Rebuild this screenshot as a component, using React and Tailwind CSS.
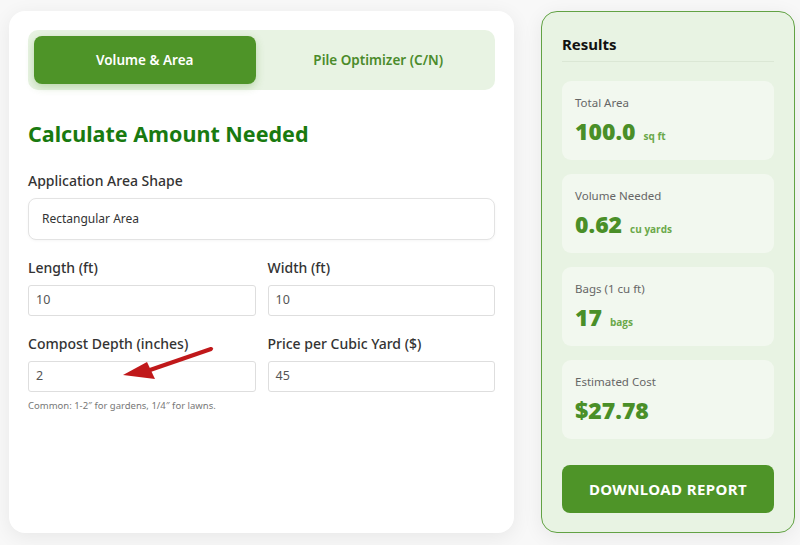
import React from 'react';

function Field({ label, value, className = '' }) {
    return (
        <div className={className}>
            <p className="text-[14px] leading-5 font-medium text-[#333]">{label}</p>
            <div className="mt-[7px] flex h-[31px] items-center rounded-[3px] border border-[#dedede] bg-white px-[7px] text-[12.5px] text-[#555]">
                {value}
            </div>
        </div>
    );
}

function ResultBox({ label, value, unit }) {
    return (
        <div className="h-[79px] rounded-[9px] bg-[#f2f8ef] px-[13px] pt-[14px]">
            <p className="text-[11.5px] leading-4 text-[#666]">{label}</p>
            <p className="mt-[6px] flex items-baseline gap-[8px] font-['Open_Sans',sans-serif] font-extrabold text-[#4a8f28]">
                <span className="text-[23px] leading-7">{value}</span>
                {unit && <span className="text-[10px] font-bold text-[#6aa84a]">{unit}</span>}
            </p>
        </div>
    );
}

export default function App() {
    return (
        <div className="flex h-[545px] w-[800px] gap-[27px] overflow-hidden bg-[#f8f8f8] pl-[9px] pt-[11px] font-['Noto_Sans',sans-serif]">
            <div className="relative h-[522px] w-[505px] shrink-0 rounded-[16px] bg-white px-[19px] pt-[19px] shadow-[0_4px_20px_rgba(0,0,0,0.07)]">
                <div className="flex h-[60px] gap-[12px] rounded-[10px] bg-[#e8f3e3] p-[6px]">
                    <div className="flex flex-1 items-center justify-center rounded-[8px] bg-[#4e9428] text-[13.5px] font-semibold text-white shadow-[0_3px_8px_rgba(78,148,40,0.3)]">
                        Volume &amp; Area
                    </div>
                    <div className="flex flex-1 items-center justify-center text-[13.5px] font-semibold text-[#4b8b2b]">
                        Pile Optimizer (C/N)
                    </div>
                </div>

                <h2 className="mt-[29px] text-[21.5px] leading-[30px] font-bold text-[#197a10]">
                    Calculate Amount Needed
                </h2>

                <p className="mt-[22px] text-[14px] leading-5 font-medium text-[#333]">
                    Application Area Shape
                </p>
                <div className="mt-[7px] flex h-[42px] items-center rounded-[8px] border border-[#e3e3e3] bg-white px-[13px] text-[12px] text-[#333] shadow-[0_1px_3px_rgba(0,0,0,0.04)]">
                    Rectangular Area
                </div>

                <div className="mt-[18px] grid grid-cols-2 gap-x-[12px] gap-y-[18px]">
                    <Field label="Length (ft)" value="10" />
                    <Field label="Width (ft)" value="10" />
                    <div>
                        <Field label="Compost Depth (inches)" value="2" />
                        <p className="mt-[7px] text-[9.5px] text-[#777]">
                            Common: 1-2″ for gardens, 1/4″ for lawns.
                        </p>
                    </div>
                    <Field label="Price per Cubic Yard ($)" value="45" />
                </div>

                {/* annotation arrow */}
                <svg className="absolute left-[103px] top-[329px]" width="110" height="50" viewBox="0 0 110 50">
                    <line x1="99" y1="9" x2="38" y2="30" stroke="#c0181a" strokeWidth="4" strokeLinecap="round" />
                    <polygon points="11,35 35,22 43,39" fill="#c0181a" />
                </svg>
            </div>

            <div className="flex h-[522px] w-[254px] shrink-0 flex-col rounded-[16px] border border-[#62a244] bg-[#e8f3e3] px-[20px] pt-[20px] shadow-[0_4px_20px_rgba(0,0,0,0.07)]">
                <h3 className="text-[15px] leading-6 font-bold text-[#111]">Results</h3>
                <div className="mt-[5px] border-b border-[#dbe7d5]" />
                <div className="mt-[19px] flex flex-col gap-[14px]">
                    <ResultBox label="Total Area" value="100.0" unit="sq ft" />
                    <ResultBox label="Volume Needed" value="0.62" unit="cu yards" />
                    <ResultBox label="Bags (1 cu ft)" value="17" unit="bags" />
                    <ResultBox label="Estimated Cost" value="$27.78" />
                </div>
                <button className="mt-[26px] flex h-[48px] items-center justify-center rounded-[8px] bg-[#4e9428] text-[15px] font-bold tracking-[0.4px] text-white">
                    DOWNLOAD REPORT
                </button>
            </div>
        </div>
    );
}
